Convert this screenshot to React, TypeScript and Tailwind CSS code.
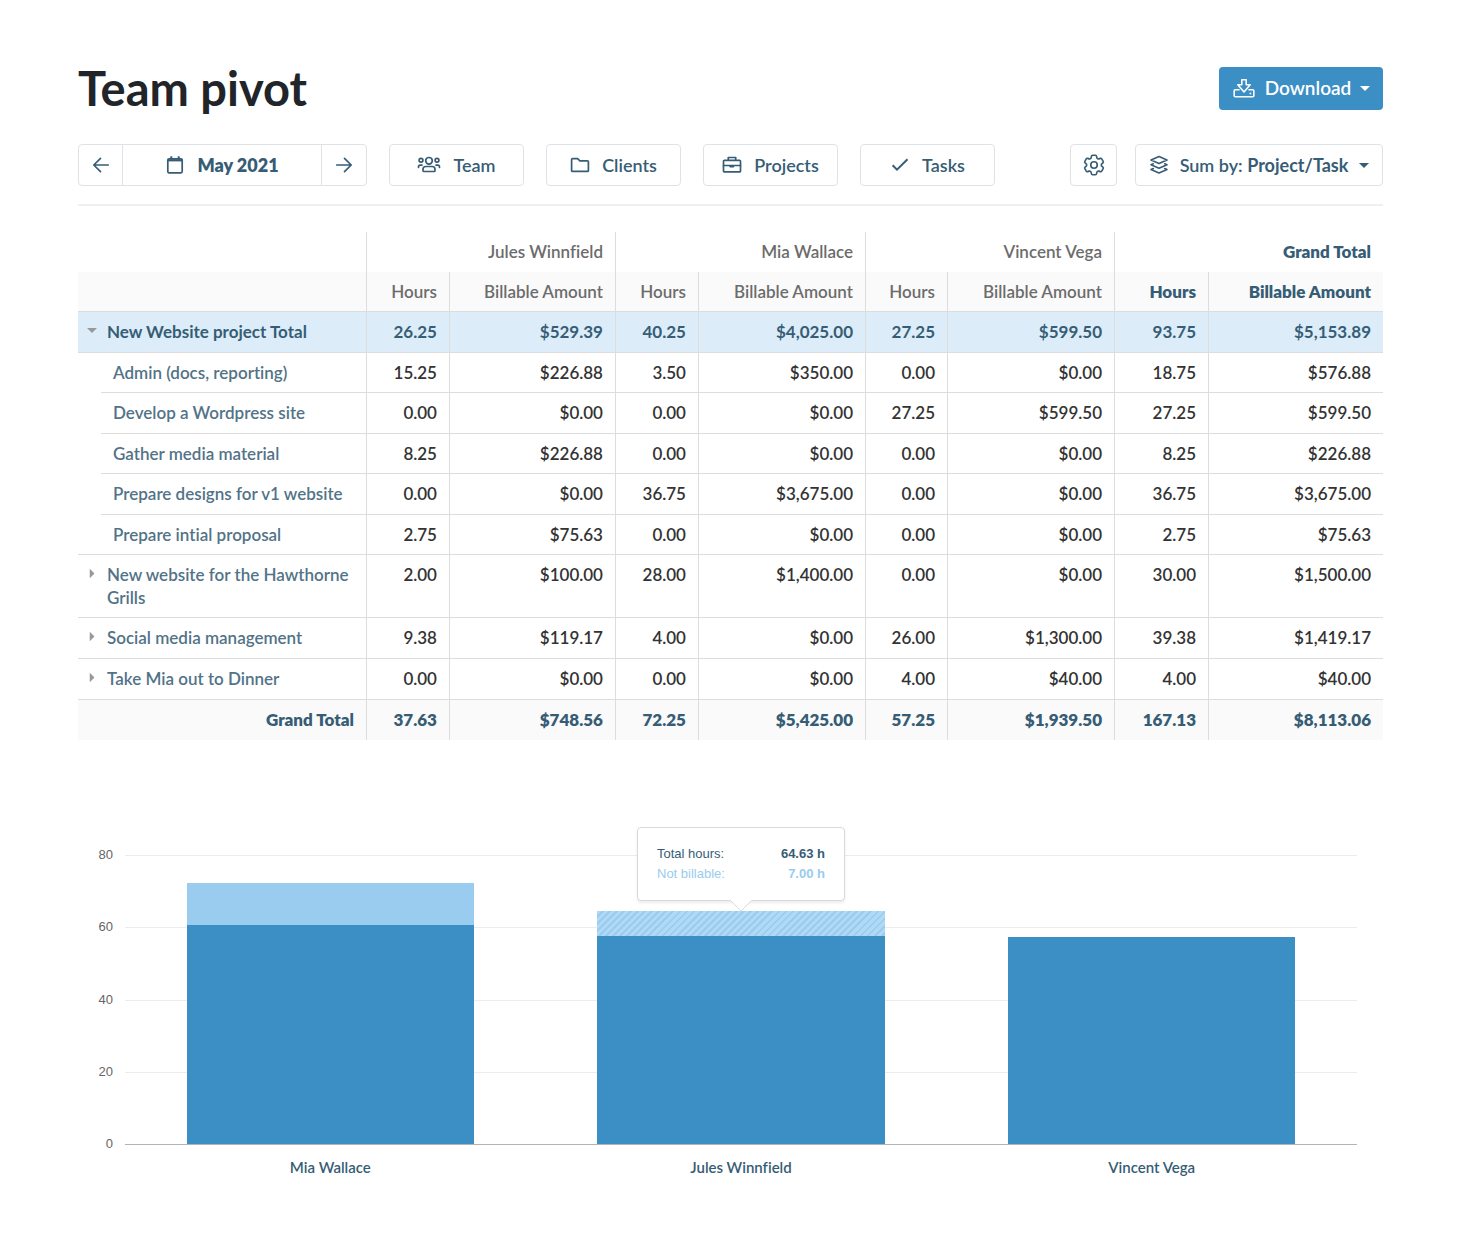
import type { ReactNode } from "react";
import clsx from "clsx";
import { HiOutlineCog6Tooth } from "react-icons/hi2";

const MEMBERS = ["Jules Winnfield", "Mia Wallace", "Vincent Vega"];

type Row = {
  name: string;
  kind: "total" | "task" | "project";
  values: string[];
};

const ROWS: Row[] = [
  {
    name: "New Website project Total",
    kind: "total",
    values: ["26.25", "$529.39", "40.25", "$4,025.00", "27.25", "$599.50", "93.75", "$5,153.89"],
  },
  {
    name: "Admin (docs, reporting)",
    kind: "task",
    values: ["15.25", "$226.88", "3.50", "$350.00", "0.00", "$0.00", "18.75", "$576.88"],
  },
  {
    name: "Develop a Wordpress site",
    kind: "task",
    values: ["0.00", "$0.00", "0.00", "$0.00", "27.25", "$599.50", "27.25", "$599.50"],
  },
  {
    name: "Gather media material",
    kind: "task",
    values: ["8.25", "$226.88", "0.00", "$0.00", "0.00", "$0.00", "8.25", "$226.88"],
  },
  {
    name: "Prepare designs for v1 website",
    kind: "task",
    values: ["0.00", "$0.00", "36.75", "$3,675.00", "0.00", "$0.00", "36.75", "$3,675.00"],
  },
  {
    name: "Prepare intial proposal",
    kind: "task",
    values: ["2.75", "$75.63", "0.00", "$0.00", "0.00", "$0.00", "2.75", "$75.63"],
  },
  {
    name: "New website for the Hawthorne Grills",
    kind: "project",
    values: ["2.00", "$100.00", "28.00", "$1,400.00", "0.00", "$0.00", "30.00", "$1,500.00"],
  },
  {
    name: "Social media management",
    kind: "project",
    values: ["9.38", "$119.17", "4.00", "$0.00", "26.00", "$1,300.00", "39.38", "$1,419.17"],
  },
  {
    name: "Take Mia out to Dinner",
    kind: "project",
    values: ["0.00", "$0.00", "0.00", "$0.00", "4.00", "$40.00", "4.00", "$40.00"],
  },
];

const GRAND_TOTAL = ["37.63", "$748.56", "72.25", "$5,425.00", "57.25", "$1,939.50", "167.13", "$8,113.06"];

const CHART_MAX = 80;
const TICKS = [80, 60, 40, 20];

const BARS = [
  { name: "Mia Wallace", total: 72.25, notBillable: 11.5, active: false },
  { name: "Jules Winnfield", total: 64.63, notBillable: 7, active: true },
  { name: "Vincent Vega", total: 57.25, notBillable: 0, active: false },
];

function Icon({ className, children }: { className: string; children: ReactNode }) {
  return (
    <svg
      aria-hidden="true"
      fill="none"
      stroke="currentColor"
      strokeWidth="1.7"
      strokeLinecap="round"
      strokeLinejoin="round"
      viewBox="0 0 20 20"
      className={clsx("shrink-0", className)}
    >
      {children}
    </svg>
  );
}

function ArrowLeft() {
  return (
    <Icon className="size-5">
      <path d="M17.2 10H3M9.5 3.3 2.8 10l6.7 6.7" />
    </Icon>
  );
}

function ArrowRight() {
  return (
    <Icon className="size-5">
      <path d="M2.8 10H17M10.5 3.3 17.2 10l-6.7 6.7" />
    </Icon>
  );
}

function CalendarIcon() {
  return (
    <Icon className="size-5">
      <rect x="2.8" y="3.8" width="14.4" height="14" rx="1.2" />
      <path d="M3 5.3h14" strokeWidth="2.2" strokeLinecap="butt" />
      <path d="M6.3 1.2v2.5M13.7 1.2v2.5" strokeWidth="2" strokeLinecap="butt" />
    </Icon>
  );
}

function TeamIcon() {
  return (
    <svg
      aria-hidden="true"
      fill="none"
      stroke="currentColor"
      strokeWidth="1.7"
      strokeLinecap="round"
      viewBox="0 0 24 20"
      className="h-5 w-6 shrink-0"
    >
      <circle cx="12" cy="5.8" r="3.3" />
      <circle cx="4" cy="5.2" r="1.9" />
      <circle cx="20" cy="5.2" r="1.9" />
      <path d="M1.5 12.3v-.5c0-1 .8-1.7 1.7-1.7H5M22.500 12.300v-.5c0-1-.8-1.700-1.700-1.700H19" />
      <path d="M8.700 11.500h6.600c1.500 0 2.700 1.200 2.700 2.700v1.300c0 .6-.4 1-1 1H7c-.6 0-1-.4-1-1v-1.300c0-1.500 1.200-2.700 2.700-2.700Z" />
    </svg>
  );
}

function FolderIcon() {
  return (
    <Icon className="size-5">
      <path d="M2.600 3.600h5l2.300 2.200h7.500c.6 0 1 .4 1 1v8.600c0 .6-.4 1-1 1H2.600c-.6 0-1-.4-1-1V4.600c0-.6.4-1 1-1Z" />
    </Icon>
  );
}

function BriefcaseIcon() {
  return (
    <Icon className="size-5">
      <rect x="1.5" y="5.3" width="17" height="11.6" rx="1" />
      <path d="M6.3 5.2V2.5h7.4v2.7M1.5 10.5h17" />
      <path d="M8.2 10.5h3.6V12H8.2z" fill="currentColor" strokeWidth="1" />
    </Icon>
  );
}

function CheckIcon() {
  return (
    <Icon className="size-5">
      <path d="m2.6 10.2 4.4 4.4L17.5 4.2" strokeWidth="2" strokeLinecap="butt" strokeLinejoin="miter" />
    </Icon>
  );
}

function LayersIcon() {
  return (
    <Icon className="size-5">
      <path
        d="m10 1.6 8 3.5-8 3.5-8-3.5zM4.3 8.800 2 9.800l8 3.500 8-3.500-2.300-1M4.300 13.500l-2.300 1 8 3.500 8-3.500-2.300-1"
        strokeWidth="1.6"
      />
    </Icon>
  );
}

function DownloadIcon() {
  return (
    <svg
      aria-hidden="true"
      fill="none"
      stroke="currentColor"
      strokeWidth="1.6"
      strokeLinejoin="round"
      viewBox="0 0 24 24"
      className="size-6 shrink-0"
    >
      <path d="M9.800 2.800h4.400v5h4L12 15 5.800 7.800h4z" />
      <path d="M7.600 12.800H3.200c-.6 0-1 .4-1 1v5c0 .6.4 1 1 1h17.600c.6 0 1-.4 1-1v-5c0-.6-.4-1-1-1h-4.400" />
      <path d="M17.600 16.500h1.600" />
    </svg>
  );
}

function Caret({ className }: { className?: string }) {
  return (
    <svg aria-hidden="true" viewBox="0 0 10 5" fill="currentColor" className={clsx("h-[5px] w-[10px] shrink-0", className)}>
      <path d="M0 0h10L5 5z" />
    </svg>
  );
}

function FilterButton({ icon, label }: { icon: ReactNode; label: string }) {
  return (
    <button
      type="button"
      className="flex h-[42px] w-[135px] items-center justify-center gap-3 rounded border border-[#dfe3e8] bg-white"
    >
      {icon}
      {label}
    </button>
  );
}

function Toolbar() {
  return (
    <div className="mt-[34px] flex flex-wrap items-center gap-[22px] border-b-2 border-[#f0f0f0] pb-[18px] text-lg font-semibold text-[#365d75]">
      <div className="flex h-[42px] w-[289px] divide-x divide-[#dfe3e8] rounded border border-[#dfe3e8]">
        <button type="button" aria-label="Previous month" className="flex w-11 items-center justify-center">
          <ArrowLeft />
        </button>
        <button type="button" className="flex flex-1 items-center justify-center gap-3 font-extrabold">
          <CalendarIcon />
          May 2021
        </button>
        <button type="button" aria-label="Next month" className="flex w-11 items-center justify-center">
          <ArrowRight />
        </button>
      </div>
      <FilterButton icon={<TeamIcon />} label="Team" />
      <FilterButton icon={<FolderIcon />} label="Clients" />
      <FilterButton icon={<BriefcaseIcon />} label="Projects" />
      <FilterButton icon={<CheckIcon />} label="Tasks" />
      <div className="ml-auto flex gap-[18px]">
        <button
          type="button"
          aria-label="Settings"
          className="flex h-[42px] w-[47px] items-center justify-center rounded border border-[#dfe3e8]"
        >
          <HiOutlineCog6Tooth aria-hidden="true" className="size-[26px]" />
        </button>
        <button
          type="button"
          aria-haspopup="menu"
          className="flex h-[42px] w-[248px] items-center justify-between rounded border border-[#dfe3e8] px-[13px]"
        >
          <LayersIcon />
          <span>
            Sum by: <b className="font-bold">Project/Task</b>
          </span>
          <Caret />
        </button>
      </div>
    </div>
  );
}

function RowLabel({ row, lastTask }: { row: Row; lastTask: boolean }) {
  if (row.kind === "task") {
    return (
      <>
        <td className={clsx(lastTask && "border-b border-[#ddd]")} />
        <th scope="row" className="border-b border-[#ddd] py-2 pl-3 text-left font-semibold text-[#527387]">
          {row.name}
        </th>
      </>
    );
  }
  const open = row.kind === "total";
  return (
    <th scope="row" colSpan={2} className="border-b border-[#ddd] py-2 pr-3 pl-[9px] text-left">
      <button
        type="button"
        aria-expanded={open}
        className={clsx("flex gap-[10px] text-left", open ? "font-bold text-[#365d75]" : "font-semibold text-[#527387]")}
      >
        <Caret className={clsx("mt-2 text-[#999]", !open && "-rotate-90")} />
        {row.name}
      </button>
    </th>
  );
}

function PivotTable() {
  return (
    <table className="mt-[26px] w-full table-fixed border-separate border-spacing-0 text-[17px] leading-[23px] font-semibold [&_td]:align-top [&_th]:align-top">
      <colgroup>
        <col className="w-[23px]" />
        <col />
        <col className="w-[83px]" />
        <col className="w-[166px]" />
        <col className="w-[83px]" />
        <col className="w-[167px]" />
        <col className="w-[82px]" />
        <col className="w-[167px]" />
        <col className="w-[94px]" />
        <col className="w-[175px]" />
      </colgroup>
      <thead className="text-right text-[#6c6c6c]">
        <tr className="h-10">
          <td colSpan={2} />
          {MEMBERS.map((member) => (
            <th key={member} scope="colgroup" colSpan={2} className="border-l border-[#ddd] px-3 py-2 font-semibold">
              {member}
            </th>
          ))}
          <th scope="colgroup" colSpan={2} className="border-l border-[#ddd] px-3 py-2 font-extrabold text-[#365d75]">
            Grand Total
          </th>
        </tr>
        <tr className="h-10 bg-[#fafafa]">
          <td colSpan={2} className="border-b border-[#ddd]" />
          {GRAND_TOTAL.map((_, i) => (
            <th
              key={i}
              scope="col"
              className={clsx(
                "border-b border-l border-[#ddd] py-2 pr-3 whitespace-nowrap",
                i > 5 ? "font-extrabold text-[#365d75]" : "font-semibold",
              )}
            >
              {i % 2 === 0 ? "Hours" : "Billable Amount"}
            </th>
          ))}
        </tr>
      </thead>
      <tbody>
        {ROWS.map((row, index) => (
          <tr
            key={row.name}
            className={clsx(
              row.kind === "task" ? "h-[41px] even:h-10" : "h-[41px]",
              row.kind === "total" ? "bg-[#dcedf9] font-bold text-[#365d75]" : "text-[#333]",
            )}
          >
            <RowLabel row={row} lastTask={ROWS[index + 1]?.kind !== "task"} />
            {row.values.map((value, i) => (
              <td key={i} className="border-b border-l border-[#ddd] py-2 pr-3 text-right">
                {value}
              </td>
            ))}
          </tr>
        ))}
      </tbody>
      <tfoot className="bg-[#fafafa] text-right font-extrabold text-[#365d75]">
        <tr className="h-10">
          <th scope="row" colSpan={2} className="py-2 pr-3 font-extrabold">
            Grand Total
          </th>
          {GRAND_TOTAL.map((value, i) => (
            <td key={i} className="border-l border-[#ddd] py-2 pr-3">
              {value}
            </td>
          ))}
        </tr>
      </tfoot>
    </table>
  );
}

function Tooltip() {
  return (
    <div className="absolute bottom-full left-1/2 mb-[10px] w-52 -translate-x-1/2 rounded border border-[#d8dadd] bg-white px-[19px] py-4 font-['Liberation_Sans',Arial,sans-serif] text-[13px] leading-5 shadow-[0_2px_3px_rgba(0,0,0,0.08)]">
      <dl>
        <div className="flex justify-between text-[#365d75]">
          <dt>Total hours:</dt>
          <dd className="font-bold">64.63 h</dd>
        </div>
        <div className="flex justify-between text-[#99ccee]">
          <dt>Not billable:</dt>
          <dd className="font-bold">7.00 h</dd>
        </div>
      </dl>
      <svg aria-hidden="true" viewBox="0 0 24 12" className="absolute top-full left-1/2 h-3 w-6 -translate-x-1/2">
        <path d="M1 0 12 11 23 0" fill="#fff" stroke="#d8dadd" />
        <path d="M1.5 0h21" stroke="#fff" strokeWidth="1" />
      </svg>
    </div>
  );
}

function HoursChart() {
  return (
    <figure aria-label="Hours per team member" className="mt-[115px] pr-[26px] pl-[11px]">
      <div className="flex">
        <div className="h-[289px] w-6 text-right font-['Liberation_Sans',Arial,sans-serif] text-[13px] leading-5 text-[#666]">
          {TICKS.map((tick) => (
            <div key={tick} className="h-1/4 -translate-y-2.5">
              {tick}
            </div>
          ))}
          <div className="h-0 -translate-y-2.5">0</div>
        </div>
        <div className="relative ml-3 flex-1 border-b border-[#b3b3b3]">
          <div className="h-[289px]">
            {TICKS.map((tick) => (
              <div key={tick} className="h-1/4 border-t border-[#ececec]" />
            ))}
          </div>
          <div className="absolute inset-0 flex items-end">
            {BARS.map((bar) => (
              <div key={bar.name} className="flex h-full flex-1 items-end justify-center">
                <div
                  className="relative flex w-[70%] flex-col bg-[#3c8fc5]"
                  style={{ height: `${(bar.total / CHART_MAX) * 100}%` }}
                >
                  <div
                    className={
                      bar.active
                        ? "bg-[repeating-linear-gradient(135deg,#b0d9f5_0_3px,#99ccee_3px_5px)]"
                        : "bg-[#99ccee]"
                    }
                    style={{ height: `${(bar.notBillable / bar.total) * 100}%` }}
                  />
                  {bar.active && <Tooltip />}
                </div>
              </div>
            ))}
          </div>
        </div>
      </div>
      <figcaption className="mt-3 ml-9 flex text-[15px] leading-5 font-semibold text-[#365d75]">
        {BARS.map((bar) => (
          <span key={bar.name} className="flex-1 text-center">
            {bar.name}
          </span>
        ))}
      </figcaption>
    </figure>
  );
}

export default function App() {
  return (
    <main className="min-h-screen bg-white pt-[67px] pr-[74px] pb-16 pl-[78px] font-[Lato,sans-serif] [font-variant-ligatures:none]">
      <header className="flex items-center justify-between">
        <h1 className="text-[47px] leading-[43px] font-bold text-[#212529]">Team pivot</h1>
        <button
          type="button"
          aria-haspopup="menu"
          className="flex h-[43px] w-[164px] items-center justify-between rounded bg-[#3c8fc5] px-[13px] text-[19px] font-semibold text-white"
        >
          <DownloadIcon />
          Download
          <Caret />
        </button>
      </header>
      <Toolbar />
      <PivotTable />
      <HoursChart />
    </main>
  );
}
